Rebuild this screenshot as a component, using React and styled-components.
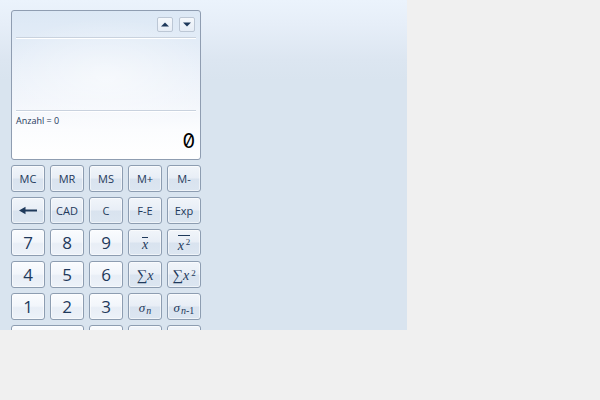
import React from "react";
import styled, { createGlobalStyle } from "styled-components";

const Global = createGlobalStyle`
  html, body { margin: 0; padding: 0; background: #f0f0f0; }
  #root { width: 600px; height: 400px; }
`;

const Window = styled.div`
  box-sizing: border-box;
  width: 407px;
  height: 330px;
  overflow: hidden;
  padding: 10px 0 0 11px;
  background: linear-gradient(to bottom, #ebf3fc 0px, #e6eef8 25px, #dce6f1 60px, #d9e4ef 80px, #d9e4ef 100%);
`;

const Column = styled.div`
  width: 190px;
  display: flex;
  flex-direction: column;
  gap: 5px;
`;

const Display = styled.div`
  box-sizing: border-box;
  height: 150px;
  border: 1px solid #8f9db1;
  border-radius: 3px;
  padding: 0 4px;
  display: flex;
  flex-direction: column;
  background:
    radial-gradient(ellipse 60% 40% at 50% 45%, rgba(255,255,255,0.55), rgba(255,255,255,0) 100%),
    linear-gradient(to bottom, #dce8f5 0%, #e6eef8 30%, #f1f5fb 60%, #fbfcfe 80%, #ffffff 100%);
`;

const Header = styled.div`
  height: 26px;
  display: flex;
  justify-content: flex-end;
  align-items: flex-start;
  gap: 6px;
  padding: 6px 1px 0 0;
  box-sizing: border-box;
`;

const ScrollBtn = styled.div`
  box-sizing: border-box;
  width: 16px;
  height: 15px;
  border: 1px solid #bcc7d5;
  border-radius: 2px;
  background: linear-gradient(to bottom, #f5f8fc, #e6edf6);
  display: flex;
  align-items: center;
  justify-content: center;
`;

const Rule = styled.div`
  height: 0;
  border-top: 1px solid #c9d2de;
  border-bottom: 1px solid #ffffff;
`;

const List = styled.div`
  height: 71px;
`;

const Count = styled.div`
  margin-top: 3px;
  font-family: "Open Sans", "Liberation Sans", sans-serif;
  font-size: 9px;
  line-height: 11px;
  color: #1e395b;
`;

const Value = styled.div`
  margin-top: auto;
  padding: 0 1px 6px 0;
  text-align: right;
  font-family: Inter, "DejaVu Sans Mono", monospace;
  font-variant-numeric: slashed-zero;
  font-feature-settings: "zero" 1;
  font-size: 20px;
  font-weight: 400;
  line-height: 24px;
  color: #000;
`;

const Pad = styled.div`
  display: grid;
  grid-template-columns: repeat(5, 34px);
  grid-auto-rows: 27px;
  gap: 5px;
`;

const fnBg = `linear-gradient(to bottom, #f1f5fa 0%, #e8eef6 48%, #d9e3ef 52%, #dce6f1 100%)`;
const digitBg = `linear-gradient(to bottom, #fafcfe 0%, #f2f6fb 48%, #e8eef6 55%, #edf2f9 100%)`;

const Key = styled.button`
  box-sizing: border-box;
  margin: 0;
  padding: 0;
  height: 27px;
  grid-column: span ${(p) => p.$span || 1};
  border: 1px solid #8d9db1;
  border-radius: 3px;
  background: ${(p) => (p.$digit ? digitBg : fnBg)};
  box-shadow: inset 0 0 0 1px rgba(255, 255, 255, 0.55);
  color: #1e395b;
  font-family: "Open Sans", "Liberation Sans", sans-serif;
  font-size: ${(p) => (p.$digit ? "17px" : "11px")};
  font-weight: 400;
  line-height: 1;
  display: flex;
  align-items: center;
  justify-content: center;
`;

const MathLabel = styled.span`
  font-family: "Liberation Serif", "DejaVu Serif", serif;
  font-size: 14px;
  color: #1e395b;
  white-space: nowrap;
  line-height: 1;
  display: inline-flex;
  align-items: flex-end;
  padding-top: 2px;
`;

const Var = styled.i`
  font-style: italic;
  font-size: ${(p) => p.$size || "inherit"};
`;

const Bar = styled.span`
  display: inline-block;
  border-top: 1px solid #1e395b;
  padding-top: ${(p) => p.$pad || 1}px;
  line-height: 12px;
`;

const Sigma = styled.span`
  font-size: 15px;
  font-style: normal;
`;

const Sup = styled.span`
  font-size: 9px;
  position: relative;
  top: -5px;
  margin-left: 2px;
`;

const Sub = styled.span`
  font-size: 10px;
  position: relative;
  top: 2px;
  margin-left: 1px;
  font-style: italic;
`;

const SubNum = styled.span`
  font-style: normal;
`;

const Up = () => (
  <svg width="8" height="5" viewBox="0 0 8 5">
    <path d="M0 4.5 L4 0.5 L8 4.5 Z" fill="#1e395b" />
  </svg>
);
const Down = () => (
  <svg width="8" height="5" viewBox="0 0 8 5">
    <path d="M0 0.5 L4 4.5 L8 0.5 Z" fill="#1e395b" />
  </svg>
);

const BackArrow = () => (
  <svg width="18" height="9" viewBox="0 0 18 9">
    <path d="M0 4.5 L6.5 0.8 L6.5 3.6 L18 3.6 L18 5.4 L6.5 5.4 L6.5 8.2 Z" fill="#1e395b" />
  </svg>
);

export default function App() {
  return (
    <>
      <Global />
      <Window>
        <Column>
          <Display>
            <Header>
              <ScrollBtn><Up /></ScrollBtn>
              <ScrollBtn><Down /></ScrollBtn>
            </Header>
            <Rule />
            <List />
            <Rule />
            <Count>Anzahl = 0</Count>
            <Value>0</Value>
          </Display>
          <Pad>
            <Key>MC</Key>
            <Key>MR</Key>
            <Key>MS</Key>
            <Key>M+</Key>
            <Key>M-</Key>

            <Key aria-label="Rücktaste"><BackArrow /></Key>
            <Key>CAD</Key>
            <Key>C</Key>
            <Key>F-E</Key>
            <Key>Exp</Key>

            <Key $digit>7</Key>
            <Key $digit>8</Key>
            <Key $digit>9</Key>
            <Key><MathLabel><Bar><Var>x</Var></Bar></MathLabel></Key>
            <Key><MathLabel><Bar $pad={4}><Var>x</Var><Sup>2</Sup></Bar></MathLabel></Key>

            <Key $digit>4</Key>
            <Key $digit>5</Key>
            <Key $digit>6</Key>
            <Key><MathLabel><Sigma>∑</Sigma><Var>x</Var></MathLabel></Key>
            <Key><MathLabel><Sigma>∑</Sigma><Var>x</Var><Sup>2</Sup></MathLabel></Key>

            <Key $digit>1</Key>
            <Key $digit>2</Key>
            <Key $digit>3</Key>
            <Key><MathLabel><Var $size="13px">σ</Var><Sub>n</Sub></MathLabel></Key>
            <Key><MathLabel><Var $size="13px">σ</Var><Sub>n<SubNum>-1</SubNum></Sub></MathLabel></Key>

            <Key $digit $span={2} aria-label="0" />
            <Key $digit aria-label="," />
            <Key aria-label="±" />
            <Key aria-label="Add" />
          </Pad>
        </Column>
      </Window>
    </>
  );
}
